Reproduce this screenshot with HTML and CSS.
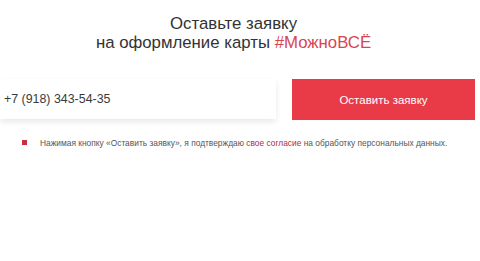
FILE: index.html
```html
<!DOCTYPE html>
<html lang="ru">
<head>
<meta charset="utf-8">
<link rel="stylesheet" href="styles.css">
</head>
<body>
<div class="wrap">
  <h2 class="title">Оставьте заявку<br>на оформление карты <span class="hash">#МожноВСЁ</span></h2>
  <form class="form">
    <div class="field">+7 (918) 343-54-35</div>
    <button type="button" class="btn">Оставить заявку</button>
  </form>
  <p class="note"><span class="bullet"></span>Нажимая кнопку «Оставить заявку», я подтверждаю <a class="link">свое согласие</a> на обработку персональных данных.</p>
</div>
</body>
</html>
```

FILE: styles.css
```css
html, body { margin: 0; padding: 0; background: #fff; }
body { font-family: "Liberation Sans", Arial, sans-serif; color: #333; }
.wrap { width: 475px; }
.title {
  margin: 0;
  padding: 14px 8px 0 0;
  font-weight: normal;
  font-size: 16.8px;
  line-height: 19px;
  text-align: center;
  color: #333;
}
.hash { color: #d94452; }
.form {
  display: flex;
  gap: 16px;
  margin-top: 27px;
}
.field {
  width: 272px;
  height: 40px;
  padding-left: 4px;
  box-sizing: content-box;
  background: #fff;
  box-shadow: 0 3px 6px rgba(0,0,0,0.09);
  font-size: 12.4px;
  line-height: 40px;
  color: #3a3a3a;
}
.btn {
  flex: 1;
  height: 41px;
  border: 0;
  margin: 0;
  padding: 0;
  background: #e93a48;
  color: #fff;
  font-family: "Liberation Sans", Arial, sans-serif;
  font-size: 11.5px;
}
.note {
  margin: 17px 0 0 22px;
  font-size: 8.4px;
  line-height: 12px;
  color: #555;
}
.bullet {
  display: inline-block;
  width: 5px;
  height: 5px;
  background: #c9303f;
  margin-right: 13px;
  vertical-align: 1px;
}
.link { color: #b52a3e; }
```
